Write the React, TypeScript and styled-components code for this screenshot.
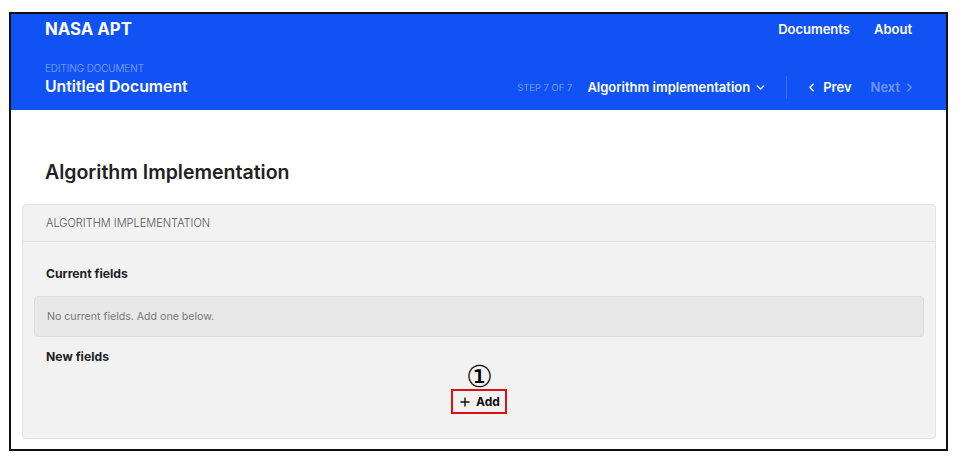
import React from "react";
import styled, { createGlobalStyle } from "styled-components";
import { ChevronDown, ChevronLeft, ChevronRight, Plus } from "lucide-react";

const Global = createGlobalStyle`
  html, body { margin: 0; padding: 0; background: #fff; }
  body { font-family: Inter, "Noto Sans", sans-serif; -webkit-font-smoothing: antialiased; }
  * { box-sizing: border-box; }
`;

const Page = styled.div`
  padding: 12px 0 0 9px;
`;

const Frame = styled.div`
  width: 939px;
  height: 439px;
  border: 2px solid #111;
  display: flex;
  flex-direction: column;
  background: #fff;
  overflow: hidden;
`;

const Header = styled.header`
  background: #1152f5;
  color: #fff;
  padding: 0 34px 13px;
  display: flex;
  flex-direction: column;
`;

const TopBar = styled.div`
  height: 30px;
  display: flex;
  align-items: center;
  justify-content: space-between;
`;

const Brand = styled.div`
  font-size: 16.8px;
  font-weight: 700;
`;

const Nav = styled.nav`
  display: flex;
  gap: 24px;
`;

const NavLink = styled.a`
  font-size: 13px;
  font-weight: 600;
  color: #fff;
`;

const DocBar = styled.div`
  margin-top: 17px;
  display: flex;
  align-items: flex-end;
  justify-content: space-between;
`;

const DocInfo = styled.div`
  display: flex;
  flex-direction: column;
`;

const Overline = styled.div`
  font-size: 9.8px;
  font-weight: 300;
  line-height: 16px;
  color: rgba(255, 255, 255, 0.5);
  text-transform: uppercase;
`;

const DocTitle = styled.div`
  font-size: 15.8px;
  font-weight: 600;
  line-height: 20px;
`;

const StepNav = styled.div`
  height: 20px;
  margin-right: -4px;
  display: flex;
  align-items: center;
`;

const StepLabel = styled.span`
  font-size: 9.5px;
  font-weight: 300;
  color: rgba(255, 255, 255, 0.5);
  margin-right: 15px;
`;

const StepSelect = styled.span`
  display: flex;
  align-items: center;
  gap: 4px;
  font-size: 13px;
  font-weight: 600;
`;

const Divider = styled.span`
  width: 1px;
  height: 23px;
  background: rgba(255, 255, 255, 0.18);
  margin: 0 18px 0 19px;
`;

const PagerButton = styled.span<{ $disabled?: boolean }>`
  display: flex;
  align-items: center;
  gap: ${(p) => (p.$disabled ? "3px" : "5px")};
  font-size: 13px;
  font-weight: 600;
  color: ${(p) => (p.$disabled ? "rgba(255,255,255,0.4)" : "#fff")};
  & + & { margin-left: 19px; }
`;

const Main = styled.main`
  flex: 1;
  padding: 50px 10px 10px 11px;
  display: flex;
  flex-direction: column;
`;

const Heading = styled.h1`
  margin: 0 0 20px 23px;
  font-size: 19.5px;
  font-weight: 600;
  line-height: 24px;
  color: #222;
`;

const Card = styled.section`
  flex: 1;
  background: #f2f2f2;
  border: 1px solid #e3e3e3;
  border-radius: 4px;
  display: flex;
  flex-direction: column;
`;

const CardHeader = styled.div`
  height: 37px;
  border-bottom: 1px solid #e0e0e0;
  padding: 0 23px;
  display: flex;
  align-items: center;
  font-size: 11px;
  font-weight: 300;
  color: #555;
  text-transform: uppercase;
`;

const CardBody = styled.div`
  padding: 23px 11px 0;
  display: flex;
  flex-direction: column;
`;

const FieldLabel = styled.h3`
  margin: 0 0 0 12px;
  font-size: 12.2px;
  font-weight: 700;
  line-height: 18px;
  color: #222;
`;

const EmptyBox = styled.div`
  margin: 13px 0 11px;
  height: 41px;
  border: 1px solid #dcdcdc;
  border-radius: 4px;
  background: #e8e8e8;
  padding: 0 12px;
  display: flex;
  align-items: center;
  font-size: 10.6px;
  color: #777;
`;

const AddRow = styled.div`
  margin-top: 23px;
  display: flex;
  justify-content: center;
`;

const AddButton = styled.button`
  position: relative;
  height: 25px;
  width: 56px;
  border: 2px solid #e01010;
  background: transparent;
  display: flex;
  align-items: center;
  justify-content: center;
  gap: 4px;
  padding: 0;
  font-family: inherit;
  font-size: 12px;
  font-weight: 700;
  color: #111;
`;

const Marker = styled.span`
  position: absolute;
  left: 50%;
  bottom: 100%;
  transform: translateX(-50%);
  margin-bottom: 1px;
  font-family: "DejaVu Serif", "Liberation Serif", serif;
  font-size: 30px;
  line-height: 26px;
  font-weight: 400;
  color: #000;
`;

export default function App() {
  return (
    <Page>
      <Global />
      <Frame>
        <Header>
          <TopBar>
            <Brand>NASA APT</Brand>
            <Nav>
              <NavLink>Documents</NavLink>
              <NavLink>About</NavLink>
            </Nav>
          </TopBar>
          <DocBar>
            <DocInfo>
              <Overline>Editing document</Overline>
              <DocTitle>Untitled Document</DocTitle>
            </DocInfo>
            <StepNav>
              <StepLabel>STEP 7 OF 7</StepLabel>
              <StepSelect>
                Algorithm implementation
                <ChevronDown size={13} strokeWidth={2.6} />
              </StepSelect>
              <Divider />
              <PagerButton>
                <ChevronLeft size={13} strokeWidth={2.6} />
                Prev
              </PagerButton>
              <PagerButton $disabled>
                Next
                <ChevronRight size={13} strokeWidth={2.6} />
              </PagerButton>
            </StepNav>
          </DocBar>
        </Header>
        <Main>
          <Heading>Algorithm Implementation</Heading>
          <Card>
            <CardHeader>Algorithm implementation</CardHeader>
            <CardBody>
              <FieldLabel>Current fields</FieldLabel>
              <EmptyBox>No current fields. Add one below.</EmptyBox>
              <FieldLabel>New fields</FieldLabel>
              <AddRow>
                <AddButton>
                  <Marker>①</Marker>
                  <Plus size={14} strokeWidth={2.4} />
                  Add
                </AddButton>
              </AddRow>
            </CardBody>
          </Card>
        </Main>
      </Frame>
    </Page>
  );
}
